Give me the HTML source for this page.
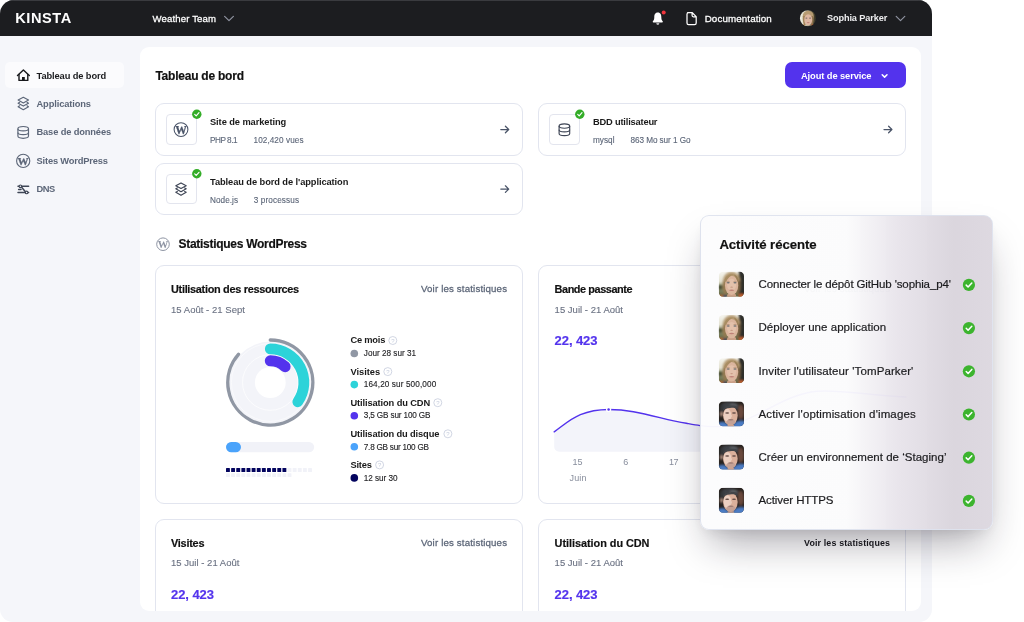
<!DOCTYPE html>
<html lang="fr">
<head>
<meta charset="utf-8">
<title>Kinsta – Tableau de bord</title>
<style>
*{box-sizing:border-box;margin:0;padding:0}
html,body{width:1024px;height:622px;background:#fff;overflow:hidden}
body{font-family:"Liberation Sans",sans-serif;position:relative;-webkit-font-smoothing:antialiased}
#root{position:absolute;left:0;top:0;width:1024px;height:622px;overflow:hidden}
.abs{position:absolute}
.t{position:absolute;white-space:nowrap;line-height:1;font-family:"Liberation Sans",sans-serif}
.lyr{position:absolute;left:0;top:0;width:1024px;height:622px;will-change:transform}
.lyr2{will-change:transform}
.w5{-webkit-text-stroke:.26px currentColor}
.hb{-webkit-text-stroke:.18px currentColor}
.w4{-webkit-text-stroke:.12px currentColor}
.w45{-webkit-text-stroke:.2px currentColor}
#win{position:absolute;left:0;top:0;width:932px;height:622px;background:#f5f6fa;border-radius:14px 14px 13px 13px;overflow:hidden}
#hdr{position:absolute;left:0;top:0;width:932px;height:36px;background:#1c1d20;border-top:1px solid #3a3b3f}
#panel{position:absolute;left:140px;top:46.8px;width:781.3px;height:564.2px;background:#fff;border-radius:9px;overflow:hidden}
.card{position:absolute;background:#fff;border:1px solid #e2e5ef;border-radius:9px}
.ibox{position:absolute;width:31px;height:30.8px;border:1px solid #e3e5ee;border-radius:4px;background:#fff}
#navact{position:absolute;left:5px;top:62.3px;width:119.3px;height:25.8px;border-radius:5px;background:#fbfbfd}
#addbtn{position:absolute;left:785px;top:62.2px;width:121px;height:25.8px;border-radius:7px;background:#5333ed}
#popup{position:absolute;left:700px;top:215px;width:292.5px;height:315.3px;border-radius:9px;
 background:linear-gradient(90deg,rgba(252,252,253,.97) 0%,rgba(251,251,252,.97) 50%,rgba(232,228,235,.975) 68%,rgba(218,213,221,.98) 87%,rgba(221,216,224,.98) 100%);
 border:1px solid rgba(222,227,238,.95);
 box-shadow:0 22px 38px -10px rgba(24,20,36,.36),0 6px 16px -6px rgba(24,20,36,.12)}
svg{position:absolute;overflow:visible}
</style>
</head>
<body>
<div id="root">
 <div id="win">
  <div id="hdr"></div>
  <div id="navact"></div>
  <div id="panel"></div>
  <!-- cards (root coordinates) -->
  <div id="cards" class="abs" style="left:0;top:0;width:921.5px;height:611px;overflow:hidden;border-radius:0 0 10px 10px">
   <div class="card" style="left:155.2px;top:103.4px;width:367.6px;height:52.4px"></div>
   <div class="card" style="left:155.2px;top:162.8px;width:367.6px;height:52.6px"></div>
   <div class="card" style="left:538.2px;top:103.4px;width:367.8px;height:52.4px"></div>
   <div class="ibox" style="left:165.7px;top:114.1px"></div>
   <div class="ibox" style="left:165.7px;top:173.7px"></div>
   <div class="ibox" style="left:549.1px;top:114.1px"></div>
   <div class="card" style="left:155.2px;top:265.4px;width:367.6px;height:238.7px"></div>
   <div class="card" style="left:538.2px;top:265.4px;width:367.8px;height:238.7px"></div>
   <div class="card" style="left:155.2px;top:518.8px;width:367.6px;height:120px"></div>
   <div class="card" style="left:538.2px;top:518.8px;width:367.8px;height:120px"></div>
   <div id="addbtn"></div>
  </div>
  <svg id="gfx" class="lyr2" width="932" height="622" viewBox="0 0 932 622" style="left:0;top:0">
   <defs>
 <clipPath id="wc1"><circle cx="23.2" cy="160.9" r="6.3"/></clipPath><clipPath id="wc2"><circle cx="181" cy="129.6" r="6.6"/></clipPath><clipPath id="wc3"><circle cx="163" cy="244.2" r="5.9"/></clipPath>
 <g id="check"><circle r="4.7" fill="#33ad27"/><path d="M-2.1 0.1 L-0.6 1.6 L2.2 -1.5" fill="none" stroke="#fff" stroke-width="1.15" stroke-linecap="round" stroke-linejoin="round"/></g>
 <g id="arrow"><path d="M-4 0 H3.7 M0.6 -3.3 L3.9 0 L0.6 3.3" fill="none" stroke="#4a5468" stroke-width="1.25" stroke-linecap="round" stroke-linejoin="round"/></g>
 <g id="layers" fill="none" stroke-width="1.15" stroke-linejoin="round" stroke-linecap="round"><path d="M0 -6.5 L5.2 -3.7 L0 -0.9 L-5.2 -3.7 Z"/><path d="M-3.7 -1.5 L-5.2 -0.6 L0 2.3 L5.2 -0.6 L3.7 -1.5"/><path d="M-3.7 2 L-5.2 2.9 L0 5.9 L5.2 2.9 L3.7 2"/></g>
 <g id="db" fill="none" stroke-width="1.15"><ellipse cx="0" cy="-3.8" rx="5.3" ry="2.2"/><path d="M-5.3 -3.8 V3.6 A5.3 2.2 0 0 0 5.3 3.6 V-3.8"/><path d="M-5.3 -0.1 A5.3 2.2 0 0 0 5.3 -0.1"/></g>
</defs>
<!-- header icons -->
<path d="M224.6 16.4 L229 20.6 L233.4 16.4" fill="none" stroke="#8f93a0" stroke-width="1.2" stroke-linecap="round" stroke-linejoin="round"/>
<path d="M896.2 16.4 L900.5 20.6 L904.8 16.4" fill="none" stroke="#8f93a0" stroke-width="1.2" stroke-linecap="round" stroke-linejoin="round"/>
<!-- bell -->
<path d="M657.8 12.4 C654.9 12.4 654.3 14.9 654.3 16.9 C654.3 19.3 653.7 20.3 652.9 21.2 C652.5 21.7 652.8 22.4 653.4 22.4 H662.2 C662.8 22.4 663.1 21.7 662.7 21.2 C661.9 20.3 661.3 19.3 661.3 16.9 C661.3 14.9 660.7 12.4 657.8 12.4 Z" fill="#fff"/>
<path d="M656.4 23.2 H659.2 V23.6 A1.4 1.2 0 0 1 656.4 23.6 Z" fill="#e9e9ea"/>
<circle cx="663.7" cy="12.6" r="2" fill="#f0343c"/>
<!-- doc icon -->
<path d="M687.6 12.7 H692.3 L696.2 16.6 V23 A1.6 1.6 0 0 1 694.6 24.6 H688.6 A1.6 1.6 0 0 1 687 23 V14.3 A1.6 1.6 0 0 1 688.6 12.7 Z M692.1 12.9 V15.6 A1.2 1.2 0 0 0 693.3 16.8 H696" fill="none" stroke="#fff" stroke-width="1.25" stroke-linejoin="round"/>
<!-- sidebar icons -->
<g fill="none" stroke="#17181b" stroke-width="1.4" stroke-linejoin="round" stroke-linecap="round">
 <path d="M17.5 75.5 L23.4 70 L29.3 75.5"/><path d="M19 74.4 V80.4 H27.8 V74.4"/>
</g>
<rect x="22" y="77" width="2.8" height="3.6" fill="#17181b"/>
<use href="#layers" x="23.3" y="103.8" stroke="#5c6678"/>
<use href="#db" x="23.2" y="132.5" stroke="#5c6678"/>
<circle cx="23.2" cy="160.9" r="6.6" fill="none" stroke="#5c6678" stroke-width="1.1"/>
<text clip-path="url(#wc1)" x="23.2" y="164.7" font-family="Liberation Serif, serif" font-weight="700" font-size="11.2" text-anchor="middle" fill="#5c6678" stroke="#5c6678" stroke-width=".25">W</text>
<g fill="none" stroke="#3f4656" stroke-width="1.5" stroke-linecap="round">
 <path d="M18 186.3 H28.6"/><path d="M18 192.4 H28.6"/><path d="M20.8 186.3 L26 192.4"/><path d="M18.6 189.4 H21"/>
</g>
<circle cx="20.4" cy="186.3" r="1.3" fill="#f5f6fa" stroke="#3f4656" stroke-width="1.1"/>
<circle cx="26.6" cy="192.4" r="1.3" fill="#f5f6fa" stroke="#3f4656" stroke-width="1.1"/>
<!-- button chevron -->
<path d="M882.2 74.7 L884.6 77.1 L887 74.7" fill="none" stroke="#fff" stroke-width="1.5" stroke-linecap="round" stroke-linejoin="round"/>
<!-- service cards -->
<circle cx="181" cy="129.6" r="6.9" fill="none" stroke="#4a5468" stroke-width="1.05"/>
<text clip-path="url(#wc2)" x="181" y="133.5" font-family="Liberation Serif, serif" font-weight="700" font-size="11.6" text-anchor="middle" fill="#4a5468" stroke="#4a5468" stroke-width=".25">W</text>
<use href="#layers" x="181" y="189.4" stroke="#3f4656"/>
<use href="#db" x="564.4" y="129.8" stroke="#3f4656"/>
<use href="#check" x="196.8" y="114.2"/><use href="#check" x="196.8" y="173.8"/><use href="#check" x="579.8" y="114.2"/>
<use href="#arrow" x="504.8" y="129.5"/><use href="#arrow" x="504.8" y="189.1"/><use href="#arrow" x="888" y="129.5"/>
<!-- section WP icon -->
<circle cx="163" cy="244.2" r="6.3" fill="none" stroke="#8e94a3" stroke-width="1"/>
<text clip-path="url(#wc3)" x="163" y="247.8" font-family="Liberation Serif, serif" font-weight="700" font-size="10.6" text-anchor="middle" fill="#8e94a3">W</text>
<!-- donut -->
<circle cx="270.3" cy="382.5" r="40.9" fill="#f3f4f9"/>
<circle cx="270.3" cy="382.5" r="15.4" fill="#fff"/>
<circle cx="270.3" cy="382.5" r="27.8" fill="none" stroke="#fff" stroke-width=".7"/>
<circle cx="270.3" cy="382.5" r="38.9" fill="none" stroke="#fff" stroke-width=".6" opacity=".85"/>
<path d="M270.30 340.00 A42.5 42.5 0 1 1 238.47 354.34" fill="none" stroke="#9097a4" stroke-width="3.4" stroke-linecap="round"/>
<path d="M270.30 348.90 A33.6 33.6 0 0 1 297.82 401.77" fill="none" stroke="#2cd3d9" stroke-width="10.8" stroke-linecap="round"/>
<path d="M270.30 360.80 A21.7 21.7 0 0 1 285.10 366.63" fill="none" stroke="#5333ed" stroke-width="11" stroke-linecap="round"/>
<rect x="226" y="441.9" width="88.2" height="10.4" rx="5.2" fill="#f1f2f8"/>
<rect x="226" y="441.9" width="15" height="10.4" rx="5.2" fill="#4aa3fb"/>
<rect x="226.00" y="467.9" width="3.9" height="4.1" rx=".6" fill="#03045e"/>
<rect x="231.13" y="467.9" width="3.9" height="4.1" rx=".6" fill="#03045e"/>
<rect x="236.26" y="467.9" width="3.9" height="4.1" rx=".6" fill="#03045e"/>
<rect x="241.39" y="467.9" width="3.9" height="4.1" rx=".6" fill="#03045e"/>
<rect x="246.52" y="467.9" width="3.9" height="4.1" rx=".6" fill="#03045e"/>
<rect x="251.65" y="467.9" width="3.9" height="4.1" rx=".6" fill="#03045e"/>
<rect x="256.78" y="467.9" width="3.9" height="4.1" rx=".6" fill="#03045e"/>
<rect x="261.91" y="467.9" width="3.9" height="4.1" rx=".6" fill="#03045e"/>
<rect x="267.04" y="467.9" width="3.9" height="4.1" rx=".6" fill="#03045e"/>
<rect x="272.17" y="467.9" width="3.9" height="4.1" rx=".6" fill="#03045e"/>
<rect x="277.30" y="467.9" width="3.9" height="4.1" rx=".6" fill="#03045e"/>
<rect x="282.43" y="467.9" width="3.9" height="4.1" rx=".6" fill="#03045e"/>
<rect x="287.56" y="467.9" width="3.9" height="4.1" rx=".6" fill="#f1f2f8"/>
<rect x="292.69" y="467.9" width="3.9" height="4.1" rx=".6" fill="#f1f2f8"/>
<rect x="297.82" y="467.9" width="3.9" height="4.1" rx=".6" fill="#f1f2f8"/>
<rect x="302.95" y="467.9" width="3.9" height="4.1" rx=".6" fill="#f1f2f8"/>
<rect x="308.08" y="467.9" width="3.9" height="4.1" rx=".6" fill="#f1f2f8"/>
<rect x="226.00" y="473.3" width="3.9" height="3.8" rx=".6" fill="#f1f2f8"/>
<rect x="231.13" y="473.3" width="3.9" height="3.8" rx=".6" fill="#f1f2f8"/>
<rect x="236.26" y="473.3" width="3.9" height="3.8" rx=".6" fill="#f1f2f8"/>
<rect x="241.39" y="473.3" width="3.9" height="3.8" rx=".6" fill="#f1f2f8"/>
<rect x="246.52" y="473.3" width="3.9" height="3.8" rx=".6" fill="#f1f2f8"/>
<rect x="251.65" y="473.3" width="3.9" height="3.8" rx=".6" fill="#f1f2f8"/>
<rect x="256.78" y="473.3" width="3.9" height="3.8" rx=".6" fill="#f1f2f8"/>
<rect x="261.91" y="473.3" width="3.9" height="3.8" rx=".6" fill="#f1f2f8"/>
<rect x="267.04" y="473.3" width="3.9" height="3.8" rx=".6" fill="#f1f2f8"/>
<rect x="272.17" y="473.3" width="3.9" height="3.8" rx=".6" fill="#f1f2f8"/>
<rect x="277.30" y="473.3" width="3.9" height="3.8" rx=".6" fill="#f1f2f8"/>
<rect x="282.43" y="473.3" width="3.9" height="3.8" rx=".6" fill="#f1f2f8"/>
<rect x="287.56" y="473.3" width="3.9" height="3.8" rx=".6" fill="#f1f2f8"/>
<circle cx="354.3" cy="353.5" r="3.8" fill="#9097a4"/>
<circle cx="392.8" cy="340.5" r="4" fill="none" stroke="#c5ccdc" stroke-width=".8"/>
<text x="392.8" y="342.6" font-family="Liberation Sans, sans-serif" font-size="6" text-anchor="middle" fill="#c5ccdc">?</text>
<circle cx="354.3" cy="384.6" r="3.8" fill="#2cd3d9"/>
<circle cx="387.8" cy="371.6" r="4" fill="none" stroke="#c5ccdc" stroke-width=".8"/>
<text x="387.8" y="373.7" font-family="Liberation Sans, sans-serif" font-size="6" text-anchor="middle" fill="#c5ccdc">?</text>
<circle cx="354.3" cy="415.7" r="3.8" fill="#5333ed"/>
<circle cx="437.8" cy="402.7" r="4" fill="none" stroke="#c5ccdc" stroke-width=".8"/>
<text x="437.8" y="404.8" font-family="Liberation Sans, sans-serif" font-size="6" text-anchor="middle" fill="#c5ccdc">?</text>
<circle cx="354.3" cy="446.8" r="3.8" fill="#4aa3fb"/>
<circle cx="447.9" cy="433.8" r="4" fill="none" stroke="#c5ccdc" stroke-width=".8"/>
<text x="447.9" y="435.9" font-family="Liberation Sans, sans-serif" font-size="6" text-anchor="middle" fill="#c5ccdc">?</text>
<circle cx="354.3" cy="477.9" r="3.8" fill="#03045e"/>
<circle cx="379.6" cy="464.9" r="4" fill="none" stroke="#c5ccdc" stroke-width=".8"/>
<text x="379.6" y="467.0" font-family="Liberation Sans, sans-serif" font-size="6" text-anchor="middle" fill="#c5ccdc">?</text>
<!-- chart -->
<path d="M554.2 431.8 C563 425.5 570.5 418.6 580.4 414.6 C589.5 411 598.5 409.6 608.6 409.5 C617 409.5 625 410.2 633.4 411.8 C642.5 413.5 651 415.5 659.9 417.6 C669 419.8 677.5 421.8 686.4 423.3 C691 424.1 695.5 424.9 700 425.6 C712 427.3 724 427.6 738 423 C762 415 788 393.5 817 391.2 C842 389.5 866 395 906 397 V451.7 H559.2 A5 5 0 0 1 554.2 446.7 Z" fill="#f3f4fa"/>
<path d="M554.2 431.8 C563 425.5 570.5 418.6 580.4 414.6 C589.5 411 598.5 409.6 608.6 409.5 C617 409.5 625 410.2 633.4 411.8 C642.5 413.5 651 415.5 659.9 417.6 C669 419.8 677.5 421.8 686.4 423.3 C691 424.1 695.5 424.9 700 425.6 C712 427.3 724 427.6 738 423 C762 415 788 393.5 817 391.2 C842 389.5 866 395 906 397" fill="none" stroke="#5333ed" stroke-width="1.45" stroke-linecap="round"/>
<circle cx="608.6" cy="409.5" r="2.6" fill="#fff"/><circle cx="608.6" cy="409.5" r="1.25" fill="#5333ed"/>
  </svg>
 </div>
 <div id="texts1" class="lyr">
<span class="t" id="logo" style="left:15.3px;top:10.66px;font-size:14.6px;font-weight:700;color:#fff;letter-spacing:0.530px;">KINSTA</span>
<span class="t w5" id="team" style="left:152.5px;top:13.64px;font-size:9.6px;font-weight:500;color:#fff;letter-spacing:0.132px;">Weather Team</span>
<span class="t w5" id="doc" style="left:704.7px;top:13.54px;font-size:9.8px;font-weight:500;color:#fff;letter-spacing:0.099px;">Documentation</span>
<span class="t" id="user" style="left:826.9px;top:13.65px;font-size:9.2px;font-weight:700;color:#ededef;letter-spacing:-0.116px;">Sophia Parker</span>
<span class="t" id="s1" style="left:36.5px;top:71.90px;font-size:9.3px;font-weight:700;color:#1a1b1e;letter-spacing:-0.102px;">Tableau de bord</span>
<span class="t" id="s2" style="left:36.5px;top:100.20px;font-size:9.3px;font-weight:700;color:#5c6678;letter-spacing:-0.118px;">Applications</span>
<span class="t" id="s3" style="left:36.5px;top:127.70px;font-size:9.3px;font-weight:700;color:#5c6678;letter-spacing:-0.133px;">Base de données</span>
<span class="t" id="s4" style="left:36.5px;top:157.20px;font-size:9.3px;font-weight:700;color:#5c6678;letter-spacing:-0.158px;">Sites WordPress</span>
<span class="t" id="s5" style="left:36.5px;top:184.70px;font-size:9.3px;font-weight:700;color:#5c6678;letter-spacing:-0.470px;">DNS</span>
<span class="t hb" id="h1" style="left:155.4px;top:69.80px;font-size:12.0px;font-weight:700;color:#111;letter-spacing:-0.228px;">Tableau de bord</span>
<span class="t" id="btn" style="left:801.0px;top:71.80px;font-size:9.3px;font-weight:700;color:#fff;letter-spacing:-0.089px;">Ajout de service</span>
<span class="t" id="c1t" style="left:210.0px;top:118.20px;font-size:9.3px;font-weight:700;color:#1a1a1a;letter-spacing:-0.081px;">Site de marketing</span>
<span class="t w4" id="c1a" style="left:210.0px;top:137.16px;font-size:8.2px;font-weight:400;color:#5c6678;letter-spacing:-0.474px;">PHP 8.1</span>
<span class="t w4" id="c1b" style="left:253.5px;top:137.16px;font-size:8.2px;font-weight:400;color:#5c6678;letter-spacing:0.075px;">102,420 vues</span>
<span class="t" id="c2t" style="left:210.0px;top:177.90px;font-size:9.3px;font-weight:700;color:#1a1a1a;letter-spacing:-0.084px;">Tableau de bord de l'application</span>
<span class="t w4" id="c2a" style="left:210.0px;top:196.76px;font-size:8.2px;font-weight:400;color:#5c6678;letter-spacing:0.039px;">Node.js</span>
<span class="t w4" id="c2b" style="left:253.8px;top:196.76px;font-size:8.2px;font-weight:400;color:#5c6678;letter-spacing:0.104px;">3 processus</span>
<span class="t" id="c3t" style="left:593.0px;top:118.20px;font-size:9.3px;font-weight:700;color:#1a1a1a;letter-spacing:-0.190px;">BDD utilisateur</span>
<span class="t w4" id="c3a" style="left:593.0px;top:137.16px;font-size:8.2px;font-weight:400;color:#5c6678;letter-spacing:0.027px;">mysql</span>
<span class="t w4" id="c3b" style="left:630.5px;top:137.16px;font-size:8.2px;font-weight:400;color:#5c6678;letter-spacing:-0.070px;">863 Mo sur 1 Go</span>
<span class="t hb" id="h2" style="left:178.5px;top:238.10px;font-size:12.0px;font-weight:700;color:#111;letter-spacing:-0.285px;">Statistiques WordPress</span>
<span class="t hb" id="r_t" style="left:171.0px;top:283.67px;font-size:10.9px;font-weight:700;color:#111;letter-spacing:-0.296px;">Utilisation des ressources</span>
<span class="t w5" id="r_l" style="left:421.0px;top:284.29px;font-size:9.7px;font-weight:500;color:#5c6678;letter-spacing:0.154px;">Voir les statistiques</span>
<span class="t w4" id="r_d" style="left:171.0px;top:304.89px;font-size:9.5px;font-weight:400;color:#6a7182;letter-spacing:0.030px;">15 Août - 21 Sept</span>
<span class="t hb" id="b_t" style="left:554.6px;top:283.67px;font-size:10.9px;font-weight:700;color:#111;letter-spacing:-0.433px;">Bande passante</span>
<span class="t w5" id="b_l" style="left:804.0px;top:284.29px;font-size:9.7px;font-weight:500;color:#5c6678;letter-spacing:0.154px;">Voir les statistiques</span>
<span class="t w4" id="b_d" style="left:554.6px;top:304.89px;font-size:9.5px;font-weight:400;color:#6a7182;letter-spacing:0.016px;">15 Juil - 21 Août</span>
<span class="t hb" id="b_n" style="left:554.6px;top:333.59px;font-size:13px;font-weight:700;color:#5333ed;letter-spacing:-0.079px;">22, 423</span>
<span class="t" id="ax1" style="left:572.5px;top:457.65px;font-size:9.0px;font-weight:400;color:#878d9c;letter-spacing:-0.016px;">15</span>
<span class="t" id="ax2" style="left:623.2px;top:457.65px;font-size:9.0px;font-weight:400;color:#878d9c;letter-spacing:-0.016px;">6</span>
<span class="t" id="ax3" style="left:669.0px;top:457.65px;font-size:9.0px;font-weight:400;color:#878d9c;letter-spacing:-0.516px;">17</span>
<span class="t" id="ax4" style="left:569.5px;top:473.55px;font-size:9.0px;font-weight:400;color:#878d9c;letter-spacing:0.161px;">Juin</span>
<span class="t hb" id="v_t" style="left:171.0px;top:537.87px;font-size:10.9px;font-weight:700;color:#111;letter-spacing:-0.237px;">Visites</span>
<span class="t w5" id="v_l" style="left:421.0px;top:537.99px;font-size:9.7px;font-weight:500;color:#5c6678;letter-spacing:0.154px;">Voir les statistiques</span>
<span class="t w4" id="v_d" style="left:171.0px;top:558.09px;font-size:9.5px;font-weight:400;color:#6a7182;letter-spacing:0.022px;">15 Juil - 21 Août</span>
<span class="t hb" id="v_n" style="left:171.0px;top:587.99px;font-size:13px;font-weight:700;color:#5333ed;letter-spacing:-0.062px;">22, 423</span>
<span class="t hb" id="u_t" style="left:554.6px;top:537.87px;font-size:10.9px;font-weight:700;color:#111;letter-spacing:-0.041px;">Utilisation du CDN</span>
<span class="t" id="u_l" style="left:804.0px;top:539.40px;font-size:8.9px;font-weight:700;color:#16161a;letter-spacing:0.140px;">Voir les statistiques</span>
<span class="t w4" id="u_d" style="left:554.6px;top:558.09px;font-size:9.5px;font-weight:400;color:#6a7182;letter-spacing:0.016px;">15 Juil - 21 Août</span>
<span class="t hb" id="u_n" style="left:554.6px;top:587.99px;font-size:13px;font-weight:700;color:#5333ed;letter-spacing:-0.079px;">22, 423</span>
<span class="t" id="l0t" style="left:350.4px;top:335.70px;font-size:9.3px;font-weight:700;color:#1a1a1a;letter-spacing:-0.195px;">Ce mois</span>
<span class="t w4" id="l0s" style="left:363.8px;top:350.36px;font-size:8.2px;font-weight:400;color:#1d1d20;letter-spacing:-0.003px;">Jour 28 sur 31</span>
<span class="t" id="l1t" style="left:350.4px;top:367.80px;font-size:9.3px;font-weight:700;color:#1a1a1a;letter-spacing:-0.002px;">Visites</span>
<span class="t w4" id="l1s" style="left:363.8px;top:381.46px;font-size:8.2px;font-weight:400;color:#1d1d20;letter-spacing:0.108px;">164,20 sur 500,000</span>
<span class="t" id="l2t" style="left:350.4px;top:398.90px;font-size:9.3px;font-weight:700;color:#1a1a1a;letter-spacing:-0.106px;">Utilisation du CDN</span>
<span class="t w4" id="l2s" style="left:363.8px;top:411.56px;font-size:8.2px;font-weight:400;color:#1d1d20;letter-spacing:-0.155px;">3,5 GB sur 100 GB</span>
<span class="t" id="l3t" style="left:350.4px;top:430.00px;font-size:9.3px;font-weight:700;color:#1a1a1a;letter-spacing:-0.121px;">Utilisation du disque</span>
<span class="t w4" id="l3s" style="left:363.8px;top:443.66px;font-size:8.2px;font-weight:400;color:#1d1d20;letter-spacing:-0.249px;">7.8 GB sur 100 GB</span>
<span class="t" id="l4t" style="left:350.4px;top:461.10px;font-size:9.3px;font-weight:700;color:#1a1a1a;letter-spacing:-0.159px;">Sites</span>
<span class="t w4" id="l4s" style="left:363.8px;top:474.76px;font-size:8.2px;font-weight:400;color:#1d1d20;letter-spacing:-0.055px;">12 sur 30</span>
 </div>
 <div id="popup"></div>
 <svg id="gfx2" class="lyr2" width="1024" height="622" viewBox="0 0 1024 622" style="left:0;top:0">
  <defs>
 <clipPath id="avc"><rect x="0" y="0" width="25.2" height="24.9" rx="4.2"/></clipPath>
 <filter id="bl" x="-20%" y="-20%" width="140%" height="140%"><feGaussianBlur stdDeviation="0.8"/></filter>
 <filter id="bl2" x="-20%" y="-20%" width="140%" height="140%"><feGaussianBlur stdDeviation="0.5"/></filter>
 <linearGradient id="wbg" x1="0" y1="0" x2="0" y2="1"><stop offset="0" stop-color="#f6f5ef"/><stop offset=".38" stop-color="#e4e2d2"/><stop offset=".62" stop-color="#8f9472"/><stop offset="1" stop-color="#59603f"/></linearGradient>
 <g id="woman" clip-path="url(#avc)">
  <rect width="25.2" height="24.9" fill="url(#wbg)"/>
  <g filter="url(#bl)">
   <rect x="20" y="-2" width="8" height="30" fill="#2d2e29"/>
   <ellipse cx="1.6" cy="15.5" rx="2.2" ry="2.2" fill="#444b33"/>
   <ellipse cx="12.8" cy="9" rx="8.7" ry="9" fill="#b39870"/>
   <path d="M4.2 9 C3.4 14 4 19 5.4 23 L8 23 L7.6 9 Z" fill="#96794f"/>
   <path d="M21.4 9 C22 14 21.4 19 20 23 L17.6 23 L18 9 Z" fill="#7f6545"/>
   <ellipse cx="2.6" cy="24.4" rx="2.8" ry="1.8" fill="#b96a35"/>
   <ellipse cx="6.2" cy="24.8" rx="2" ry="1.8" fill="#34425f"/>
   <ellipse cx="22.6" cy="24" rx="2.8" ry="2" fill="#c8622f"/>
  </g>
  <g filter="url(#bl2)">
   <ellipse cx="12.8" cy="24.2" rx="4.6" ry="3" fill="#c99f86"/>
   <ellipse cx="12.8" cy="13.6" rx="6.6" ry="9.7" fill="#dbb59d"/>
   <ellipse cx="12.8" cy="13" rx="4.6" ry="6" fill="#e3c1ab"/>
   <ellipse cx="9.4" cy="10.9" rx="1.6" ry=".75" fill="#6e6f72"/>
   <ellipse cx="16.2" cy="10.9" rx="1.6" ry=".75" fill="#6e6f72"/>
   <ellipse cx="9.4" cy="9.5" rx="2" ry=".45" fill="#b39277"/>
   <ellipse cx="16.2" cy="9.5" rx="2" ry=".45" fill="#b39277"/>
   <ellipse cx="12.8" cy="18.5" rx="2.5" ry=".8" fill="#bf8278"/>
   <ellipse cx="12.8" cy="15.4" rx="1.3" ry=".6" fill="#c99c86"/>
   <path d="M5.6 8.4 C7 3.6 11 2 14.6 2.6 C12 3.8 9 5.8 7.2 10.4 Z" fill="#a98d63"/>
   <path d="M20 8.4 C19 4.6 17 3 14.6 2.6 C16.4 4.2 17.8 6.4 18.6 10 Z" fill="#9c8059"/>
  </g>
 </g>
 <g id="man" clip-path="url(#avc)">
  <rect width="25.2" height="24.9" fill="#27221f"/>
  <g filter="url(#bl)">
   <ellipse cx="22" cy="10.5" rx="3.2" ry="7.5" fill="#6a493c"/>
   <ellipse cx="10.8" cy="5" rx="8.8" ry="4.6" fill="#3c3f44"/>
   <ellipse cx="15" cy="3.6" rx="4" ry="1.6" fill="#5b5e63"/>
   <rect x="1.4" y="4" width="3.4" height="9" fill="#35373b"/>
   <path d="M-1 21.6 C3 19.6 6 19.8 8.6 22.6 L12 25 L16 21.4 C19 18.8 23 18.6 27 20 V27 H-1 Z" fill="#4b7bc4"/>
   <ellipse cx="2.7" cy="12.8" rx="1.2" ry="2.2" fill="#dcb19c"/>
  </g>
  <g filter="url(#bl2)">
   <ellipse cx="11.6" cy="14.2" rx="7.3" ry="9.6" fill="#dbb09b"/>
   <ellipse cx="8.6" cy="13.8" rx="3.8" ry="6.4" fill="#ecd0c2"/>
   <path d="M4.4 7.6 C6.6 4.4 11 3.6 16.6 4.4 C18 5.2 18.8 6.2 19 7.6 C15 5.8 9 5.8 4.4 9 Z" fill="#424448"/>
   <ellipse cx="8.4" cy="11.5" rx="2" ry=".75" fill="#5f4842"/>
   <ellipse cx="15.2" cy="11.5" rx="2" ry=".75" fill="#5f4842"/>
   <ellipse cx="11.8" cy="14.6" rx="1.3" ry="1.6" fill="#e9cbbb"/>
   <ellipse cx="12" cy="20.6" rx="4.4" ry="2.6" fill="#c4a195"/>
   <ellipse cx="12" cy="18.4" rx="2.7" ry=".8" fill="#9c7b72"/>
   <ellipse cx="12" cy="24.4" rx="3.4" ry="1.2" fill="#c9a08e"/>
  </g>
 </g>
 <g id="pcheck"><circle r="6.1" fill="#3cb42e"/><path d="M-2.7 0.2 L-0.8 2.1 L2.9 -1.9" fill="none" stroke="#fff" stroke-width="1.5" stroke-linecap="round" stroke-linejoin="round"/></g>
</defs>
<use href="#woman" x="718.8" y="271.8"/>
<use href="#pcheck" x="968.9" y="284.9"/>
<use href="#woman" x="718.8" y="315.0"/>
<use href="#pcheck" x="968.9" y="328.1"/>
<use href="#woman" x="718.8" y="358.2"/>
<use href="#pcheck" x="968.9" y="371.3"/>
<use href="#man" x="718.8" y="401.4"/>
<use href="#pcheck" x="968.9" y="414.5"/>
<use href="#man" x="718.8" y="444.6"/>
<use href="#pcheck" x="968.9" y="457.7"/>
<use href="#man" x="718.8" y="487.8"/>
<use href="#pcheck" x="968.9" y="500.9"/>
<defs><clipPath id="hav"><circle cx="12.6" cy="12.6" r="12.3"/></clipPath>
<linearGradient id="hbg" x1="0" y1="0" x2="1" y2="0"><stop offset="0" stop-color="#f0efe4"/><stop offset=".3" stop-color="#dcd9c4"/><stop offset=".8" stop-color="#5a5338"/><stop offset="1" stop-color="#2c2a20"/></linearGradient></defs>
<g transform="translate(799.7 10) scale(.655)"><g clip-path="url(#hav)">
 <rect width="25.2" height="25.2" fill="url(#hbg)"/>
 <g filter="url(#bl)">
  <ellipse cx="13" cy="9.6" rx="8.4" ry="8.6" fill="#b79b72"/>
  <path d="M5 9 C4 14 5 19 6.6 23 L9 23 L8.4 9 Z" fill="#a1845a"/>
  <path d="M21 9 C21.8 14 21 19 19.4 23 L17.2 23 L17.8 9 Z" fill="#8f7450"/>
  <ellipse cx="5" cy="24" rx="3" ry="2" fill="#c9772f"/><ellipse cx="21" cy="23.6" rx="3" ry="2.2" fill="#b4552a"/>
 </g>
 <g filter="url(#bl)">
  <ellipse cx="13" cy="15" rx="6" ry="8.6" fill="#ddb7a2"/>
  <ellipse cx="10.2" cy="12.4" rx="1.6" ry=".9" fill="#7a6a66"/><ellipse cx="15.8" cy="12.4" rx="1.6" ry=".9" fill="#7a6a66"/>
  <ellipse cx="13" cy="19.2" rx="2.2" ry=".9" fill="#c38479"/>
 </g>
</g></g>
 </svg>
 <div id="texts2" class="lyr">
<span class="t hb" id="p_t" style="left:719.4px;top:238.18px;font-size:13.2px;font-weight:700;color:#111;letter-spacing:-0.068px;">Activité récente</span>
<span class="t w45" id="p0" style="left:758.5px;top:278.56px;font-size:11.5px;font-weight:400;color:#1b1b1e;letter-spacing:-0.123px;">Connecter le dépôt GitHub 'sophia_p4'</span>
<span class="t w45" id="p1" style="left:758.5px;top:321.76px;font-size:11.5px;font-weight:400;color:#1b1b1e;letter-spacing:0.048px;">Déployer une application</span>
<span class="t w45" id="p2" style="left:758.5px;top:365.96px;font-size:11.5px;font-weight:400;color:#1b1b1e;letter-spacing:0.098px;">Inviter l'utilisateur 'TomParker'</span>
<span class="t w45" id="p3" style="left:758.5px;top:409.16px;font-size:11.5px;font-weight:400;color:#1b1b1e;letter-spacing:0.129px;">Activer l'optimisation d'images</span>
<span class="t w45" id="p4" style="left:758.5px;top:452.36px;font-size:11.5px;font-weight:400;color:#1b1b1e;letter-spacing:0.020px;">Créer un environnement de ‘Staging’</span>
<span class="t w45" id="p5" style="left:758.5px;top:494.56px;font-size:11.5px;font-weight:400;color:#1b1b1e;letter-spacing:-0.087px;">Activer HTTPS</span>
 </div>
</div>
</body>
</html>
